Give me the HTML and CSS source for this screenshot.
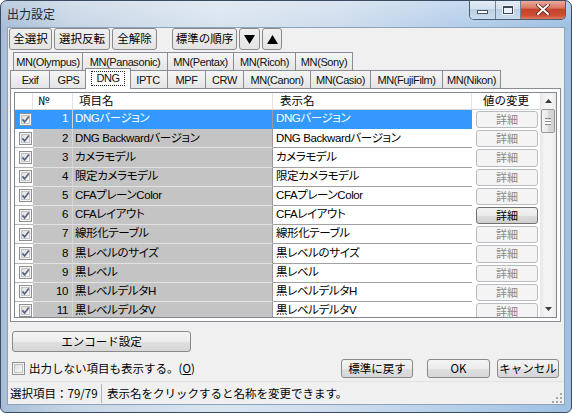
FILE: index.html
```html
<!DOCTYPE html>
<html lang="ja">
<head>
<meta charset="utf-8">
<title>出力設定</title>
<link rel="stylesheet" href="styles.css">
</head>
<body>
<svg class="defs" width="0" height="0" aria-hidden="true">
  <defs>
    <linearGradient id="cbg" x1="0" y1="0" x2="1" y2="1">
      <stop offset="0" stop-color="#dcdcdc"/>
      <stop offset="1" stop-color="#fbfbfb"/>
    </linearGradient>
    <symbol id="chk" viewBox="0 0 13 13">
      <rect x="0.5" y="0.5" width="12" height="12" fill="#f4f4f4" stroke="#8e8f8f"/>
      <rect x="2.5" y="2.5" width="8" height="8" fill="url(#cbg)" stroke="#c3c3c3"/>
      <path d="M3.4 6.4 L5.6 8.9 L9.8 3.4" fill="none" stroke="#5a6282" stroke-width="1.7"/>
    </symbol>
    <symbol id="unchk" viewBox="0 0 13 13">
      <rect x="0.5" y="0.5" width="12" height="12" fill="#f4f4f4" stroke="#8e8f8f"/>
      <rect x="2.5" y="2.5" width="8" height="8" fill="url(#cbg)" stroke="#c3c3c3"/>
    </symbol>
  </defs>
</svg>
<div class="window">
  <div class="titlebar">
    <span class="title">出力設定</span>
    <div class="caption">
      <div class="cb min"><span class="min-glyph"></span></div>
      <div class="cb max"><span class="max-glyph"></span></div>
      <div class="cb close">
        <svg width="14" height="11" viewBox="0 0 14 11"><path d="M2 1 L12 10 M12 1 L2 10" stroke="#5a1a10" stroke-width="3.6" stroke-linecap="round"/><path d="M2 1 L12 10 M12 1 L2 10" stroke="#fff" stroke-width="2" stroke-linecap="round"/></svg>
      </div>
    </div>
  </div>
  <div class="client">
    <div class="toolbar">
      <div class="btn w43">全選択</div>
      <div class="btn w56">選択反転</div>
      <div class="btn w45">全解除</div>
      <div class="btn w65 gap">標準の順序</div>
      <div class="btn w21"><svg width="11" height="9" viewBox="0 0 11 9"><polygon points="0,0 11,0 5.5,9" fill="#000"/></svg></div>
      <div class="btn w20"><svg width="11" height="9" viewBox="0 0 11 9"><polygon points="0,9 11,9 5.5,0" fill="#000"/></svg></div>
    </div>
    <div class="tabs">
      <div class="tabrow back">
        <div class="tab t70">MN(Olympus)</div>
        <div class="tab t86">MN(Panasonic)</div>
        <div class="tab t67">MN(Pentax)</div>
        <div class="tab t63">MN(Ricoh)</div>
        <div class="tab t58">MN(Sony)</div>
      </div>
      <div class="tabrow front">
        <div class="tab t40">Exif</div>
        <div class="tab t39">GPS</div>
        <div class="tab sel"><span class="focus">DNG</span></div>
        <div class="tab t40">IPTC</div>
        <div class="tab t39">MPF</div>
        <div class="tab t39">CRW</div>
        <div class="tab t68">MN(Canon)</div>
        <div class="tab t61">MN(Casio)</div>
        <div class="tab t73">MN(FujiFilm)</div>
        <div class="tab t59">MN(Nikon)</div>
      </div>
    </div>
    <div class="panel">
      <div class="grid">
        <div class="table">
          <div class="hd"></div>
          <div class="hd hno">№</div>
          <div class="hd hnm">項目名</div>
          <div class="hd hdp">表示名</div>
          <div class="hd hval">値の変更</div>

          <div class="c ck sel"><svg width="13" height="13"><use href="#chk"/></svg></div>
          <div class="c no sel">1</div>
          <div class="c nm sel">DNGバージョン</div>
          <div class="c dp sel">DNGバージョン</div>
          <div class="c val"><span class="dbtn">詳細</span></div>

          <div class="c ck"><svg width="13" height="13"><use href="#chk"/></svg></div>
          <div class="c no">2</div>
          <div class="c nm">DNG Backwardバージョン</div>
          <div class="c dp">DNG Backwardバージョン</div>
          <div class="c val"><span class="dbtn">詳細</span></div>

          <div class="c ck"><svg width="13" height="13"><use href="#chk"/></svg></div>
          <div class="c no">3</div>
          <div class="c nm">カメラモデル</div>
          <div class="c dp">カメラモデル</div>
          <div class="c val"><span class="dbtn">詳細</span></div>

          <div class="c ck"><svg width="13" height="13"><use href="#chk"/></svg></div>
          <div class="c no">4</div>
          <div class="c nm">限定カメラモデル</div>
          <div class="c dp">限定カメラモデル</div>
          <div class="c val"><span class="dbtn">詳細</span></div>

          <div class="c ck"><svg width="13" height="13"><use href="#chk"/></svg></div>
          <div class="c no">5</div>
          <div class="c nm">CFAプレーンColor</div>
          <div class="c dp">CFAプレーンColor</div>
          <div class="c val"><span class="dbtn">詳細</span></div>

          <div class="c ck"><svg width="13" height="13"><use href="#chk"/></svg></div>
          <div class="c no">6</div>
          <div class="c nm">CFAレイアウト</div>
          <div class="c dp">CFAレイアウト</div>
          <div class="c val"><span class="dbtn on">詳細</span></div>

          <div class="c ck"><svg width="13" height="13"><use href="#chk"/></svg></div>
          <div class="c no">7</div>
          <div class="c nm">線形化テーブル</div>
          <div class="c dp">線形化テーブル</div>
          <div class="c val"><span class="dbtn">詳細</span></div>

          <div class="c ck"><svg width="13" height="13"><use href="#chk"/></svg></div>
          <div class="c no">8</div>
          <div class="c nm">黒レベルのサイズ</div>
          <div class="c dp">黒レベルのサイズ</div>
          <div class="c val"><span class="dbtn">詳細</span></div>

          <div class="c ck"><svg width="13" height="13"><use href="#chk"/></svg></div>
          <div class="c no">9</div>
          <div class="c nm">黒レベル</div>
          <div class="c dp">黒レベル</div>
          <div class="c val"><span class="dbtn">詳細</span></div>

          <div class="c ck"><svg width="13" height="13"><use href="#chk"/></svg></div>
          <div class="c no">10</div>
          <div class="c nm">黒レベルデルタH</div>
          <div class="c dp">黒レベルデルタH</div>
          <div class="c val"><span class="dbtn">詳細</span></div>

          <div class="c ck"><svg width="13" height="13"><use href="#chk"/></svg></div>
          <div class="c no">11</div>
          <div class="c nm">黒レベルデルタV</div>
          <div class="c dp">黒レベルデルタV</div>
          <div class="c val"><span class="dbtn">詳細</span></div>
        </div>
        <div class="vscroll">
          <div class="sb-arrow"><svg width="7" height="4" viewBox="0 0 7 4"><polygon points="0,4 7,4 3.5,0" fill="#3c3c3c"/></svg></div>
          <div class="thumb"><span class="grip"></span></div>
          <div class="track"></div>
          <div class="sb-arrow"><svg width="7" height="4" viewBox="0 0 7 4"><polygon points="0,0 7,0 3.5,4" fill="#3c3c3c"/></svg></div>
        </div>
      </div>
    </div>
    <div class="btn encode">エンコード設定</div>
    <div class="footer">
      <label class="chk-label"><svg width="13" height="13"><use href="#unchk"/></svg><span>出力しない項目も表示する。(<u>O</u>)</span></label>
      <div class="fbtns">
        <div class="btn w72">標準に戻す</div>
        <div class="btn w63 ok">OK</div>
        <div class="btn w62">キャンセル</div>
      </div>
    </div>
    <div class="status">
      <span class="st1">選択項目：79/79</span>
      <span class="st2">表示名をクリックすると名称を変更できます。</span>
      <svg class="sgrip" width="10" height="10" viewBox="0 0 10 10">
        <g fill="#a8a8a8"><rect x="8" y="0" width="2" height="2"/><rect x="4" y="4" width="2" height="2"/><rect x="8" y="4" width="2" height="2"/><rect x="0" y="8" width="2" height="2"/><rect x="4" y="8" width="2" height="2"/><rect x="8" y="8" width="2" height="2"/></g>
      </svg>
    </div>
  </div>
</div>
</body>
</html>
```

FILE: styles.css
```css
html, body {
  margin: 0;
  padding: 0;
}
body {
  width: 572px;
  height: 413px;
  overflow: hidden;
  font-family: "Noto Sans CJK JP", "Noto Sans", sans-serif;
  font-size: 11.5px;
  color: #000;
  background: #fff;
}
.defs {
  position: absolute;
  width: 0;
  height: 0;
}
.window {
  box-sizing: border-box;
  width: 572px;
  height: 413px;
  border: 1px solid #3a4c61;
  border-radius: 7px 7px 6px 6px;
  background:
    linear-gradient(180deg, rgba(255,255,255,0.25) 0px, rgba(255,255,255,0) 26px),
    linear-gradient(90deg, #a7bed6 0%, #c6d5e5 12%, #d9e4ef 38%, #cfdded 58%, #b5cfea 80%, #9fc0e2 100%);
  display: flex;
  flex-direction: column;
  padding-bottom: 7px;
  overflow: hidden;
}
.titlebar {
  flex: none;
  height: 26px;
  display: flex;
  justify-content: space-between;
  align-items: flex-start;
  padding: 0 5px 0 6px;
}
.title {
  padding-top: 5px;
  font-size: 12px;
  line-height: 15px;
  color: #1b2634;
}
.caption {
  display: flex;
  margin-top: -1px;
  height: 19px;
  border: 1px solid #4d5d70;
  border-top: none;
  border-radius: 0 0 5px 5px;
  overflow: hidden;
}
.cb {
  display: flex;
  align-items: center;
  justify-content: center;
}
.cb.min {
  width: 25px;
  border-right: 1px solid #6f8296;
  background: linear-gradient(#e6edf6, #d3e0ee 45%, #bccfe4 50%, #cadcef 100%);
  align-items: flex-end;
}
.min-glyph {
  display: block;
  width: 9px;
  height: 2px;
  margin-bottom: 5px;
  background: #fff;
  border: 1px solid #4a5564;
}
.cb.max {
  width: 24px;
  border-right: 1px solid #6f8296;
  background: linear-gradient(#e6edf6, #d3e0ee 45%, #bccfe4 50%, #cadcef 100%);
}
.max-glyph {
  display: block;
  box-sizing: border-box;
  width: 10px;
  height: 8px;
  border: 1px solid #3d4755;
  border-top-width: 2px;
  background: #eef3f8;
  box-shadow: 0 0 0 1px rgba(255,255,255,0.7);
}
.cb.close {
  width: 44px;
  background: linear-gradient(#eab2a6 0%, #d77762 42%, #c5432c 50%, #cc4d35 80%, #e07a5c 100%);
}
.client {
  flex: 1;
  min-height: 0;
  margin: 0 6px;
  border: 1px solid #8ea3ba;
  background: #f0f0f0;
  display: flex;
  flex-direction: column;
}
.btn {
  box-sizing: border-box;
  display: flex;
  align-items: center;
  justify-content: center;
  border: 1px solid #8a8a8a;
  border-radius: 3px;
  background: linear-gradient(#f4f4f4 0%, #ececec 50%, #e0e0e0 51%, #d6d6d6 100%);
  font-size: 11.5px;
  line-height: 1;
  color: #000;
  white-space: nowrap;
  flex: none;
}
.toolbar {
  flex: none;
  display: flex;
  height: 22px;
  margin-left: 1px;
  gap: 2px;
}
.toolbar .btn {
  height: 22px;
  background: linear-gradient(#f0f0f0, #e4e4e4);
}
.w43 { width: 43px; }
.w56 { width: 56px; }
.w45 { width: 45px; }
.w65 { width: 65px; }
.w21 { width: 21px; }
.w20 { width: 20px; }
.w72 { width: 72px; }
.w63 { width: 63px; }
.w62 { width: 62px; }
.gap { margin-left: 13px; }

.tabs {
  flex: none;
  margin-top: 2px;
  height: 36px;
}
.tabrow {
  display: flex;
  height: 18px;
}
.tabrow.back { margin-left: 5px; }
.tabrow.front { margin-left: 2px; }
.tab {
  box-sizing: border-box;
  flex: none;
  height: 18px;
  border: 1px solid #898c95;
  border-bottom: none;
  margin-right: -1px;
  background: linear-gradient(#f5f5f5, #e5e5e5);
  display: flex;
  align-items: center;
  justify-content: center;
  font-family: "Liberation Sans", "Noto Sans CJK JP", sans-serif;
  font-size: 11px;
  letter-spacing: -0.4px;
  line-height: 1;
  white-space: nowrap;
  color: #111;
  padding-top: 1px;
}
.t39 { width: 39px; }
.t40 { width: 40px; }
.t58 { width: 58px; }
.t59 { width: 59px; }
.t61 { width: 61px; }
.t63 { width: 63px; }
.t67 { width: 67px; }
.t68 { width: 68px; }
.t70 { width: 70px; }
.t73 { width: 73px; }
.t86 { width: 86px; }
.tab.sel {
  position: relative;
  z-index: 2;
  width: 46px;
  height: 21px;
  margin: -2px -3px 0 -2px;
  background: #fff;
  padding-bottom: 2px;
}
.focus {
  outline: 1px dotted #222;
  outline-offset: 1px;
  padding: 0 3px;
}

.panel {
  flex: none;
  box-sizing: border-box;
  margin-left: 2px;
  width: 551px;
  height: 234px;
  border: 1px solid #898c95;
  background: #fff;
  padding: 3px;
}
.grid {
  box-sizing: border-box;
  width: 543px;
  height: 226px;
  border: 1px solid #828790;
  display: flex;
  background: #fff;
}
.table {
  width: 525px;
  display: grid;
  grid-template-columns: 18px 40px 200px 199px 68px;
  grid-template-rows: 17px;
  grid-auto-rows: 19.2px;
  align-content: start;
  overflow: hidden;
}
.hd {
  box-sizing: border-box;
  display: flex;
  align-items: center;
  border-right: 1px solid #e3e3e3;
  border-bottom: 1px solid #d5d5d5;
  background: #fff;
  line-height: 1;
  white-space: nowrap;
}
.hno { padding-left: 5px; }
.hnm { padding-left: 6px; }
.hdp { padding-left: 7px; }
.hval { justify-content: center; border-right: none; }
.c {
  box-sizing: border-box;
  display: flex;
  align-items: center;
  white-space: nowrap;
  overflow: hidden;
  line-height: 1;
  border-bottom: 1px solid #a0a0a0;
  background: #fff;
}
.c.no, .c.nm, .c.dp {
  font-family: "Liberation Sans", "Noto Sans CJK JP", sans-serif;
  font-feature-settings: "palt";
  letter-spacing: -0.4px;
}
.c.ck {
  justify-content: center;
  padding-left: 2px;
  border-bottom-color: #b4b4b4;
}
.c.no {
  background: #c4c4c4;
  justify-content: flex-end;
  padding-right: 4px;
  border-bottom-color: #e2e2e2;
  border-right: 1px solid #d6d6d6;
}
.c.nm {
  background: #c4c4c4;
  padding-left: 2px;
  border-bottom-color: #e2e2e2;
  border-right: 1px solid #9a9a9a;
}
.c.dp {
  padding-left: 3px;
}
.c.val {
  border-bottom: none;
  padding: 1px 2px 1px 4px;
  align-items: stretch;
}
.c.sel {
  background: #3399ff;
  color: #fff;
  border-bottom-color: #3399ff;
}
.dbtn {
  box-sizing: border-box;
  flex: 1;
  display: flex;
  align-items: center;
  justify-content: center;
  border: 1px solid #b8bcc0;
  border-radius: 3px;
  background: #f4f4f4;
  color: #8a8a8a;
  font-size: 11px;
}
.dbtn.on {
  border-color: #707070;
  color: #000;
  background: linear-gradient(#f2f2f2 0%, #ebebeb 50%, #dddddd 51%, #cfcfcf 100%);
}
.vscroll {
  width: 16px;
  display: flex;
  flex-direction: column;
  background: linear-gradient(90deg, #e6e6e6, #f4f4f4 30%, #f4f4f4 70%, #e9e9e9);
}
.sb-arrow {
  height: 16px;
  display: flex;
  align-items: center;
  justify-content: center;
  flex: none;
}
.thumb {
  box-sizing: border-box;
  flex: none;
  height: 24px;
  margin: 0 1px;
  border: 1px solid #989898;
  border-radius: 2px;
  background: linear-gradient(90deg, #f4f4f4, #e8e8e8 50%, #d9d9d9 51%, #d2d2d2);
  display: flex;
  align-items: center;
  justify-content: center;
}
.grip {
  display: block;
  width: 6px;
  height: 5px;
  border-top: 1px solid #8a8a8a;
  border-bottom: 1px solid #8a8a8a;
  background: linear-gradient(#fff 0, #fff 1px, #8a8a8a 1px, #8a8a8a 2px, #fff 2px);
  background-size: 6px 5px;
  background-repeat: no-repeat;
  background-position: 0 1px;
}
.track { flex: 1; }

.encode {
  margin: 9px 0 0 4px;
  width: 179px;
  height: 21px;
}
.footer {
  flex: none;
  height: 21px;
  margin-top: 6px;
  padding: 0 5px 0 4px;
  display: flex;
  align-items: center;
  justify-content: space-between;
}
.chk-label {
  display: flex;
  align-items: center;
  gap: 4px;
  line-height: 1;
}
.chk-label svg { flex: none; }
.fbtns {
  display: flex;
  gap: 7px;
}
.fbtns .btn { height: 19px; }
.fbtns .ok { margin-left: 7px; }
.status {
  flex: none;
  margin-top: 2px;
  height: 23px;
  display: flex;
  align-items: center;
  line-height: 1;
  border-top: 1px solid #e2e2e2;
}
.st1 {
  box-sizing: border-box;
  width: 94px;
  padding-left: 2px;
  border-right: 1px solid #b4b4b4;
  height: 19px;
  display: flex;
  align-items: center;
}
.st2 {
  flex: 1;
  padding-left: 5px;
}
.sgrip {
  align-self: flex-end;
  margin: 0 2px 2px 0;
}
```
